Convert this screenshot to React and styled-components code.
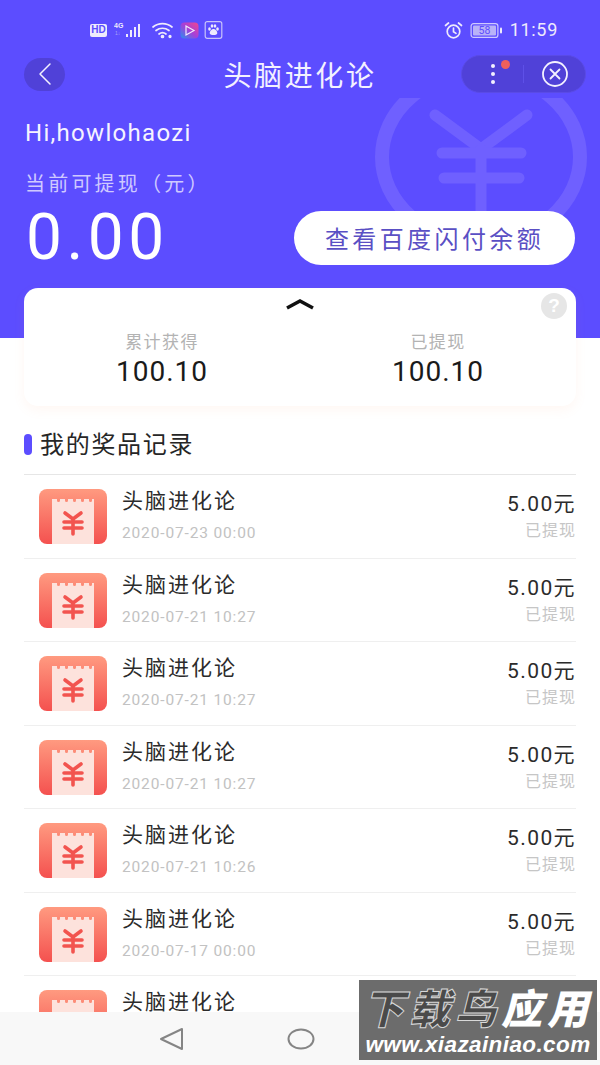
import React from "react";
import styled, { createGlobalStyle } from "styled-components";

const CJK = `"Noto Sans CJK SC", "Noto Sans", sans-serif`;
const NUM = `Roboto, "Noto Sans CJK SC", sans-serif`;

const Global = createGlobalStyle`
  html, body { margin: 0; padding: 0; background: #fff; }
  * { box-sizing: border-box; }
  #root { width: 600px; height: 1065px; }
`;

const Page = styled.div`
  position: relative;
  width: 600px;
  height: 1065px;
  overflow: hidden;
  background: #fff;
  font-family: ${CJK};
`;

const Hero = styled.header`
  position: relative;
  height: 338px;
  background: #5c4dff;
  color: #fff;
  padding-top: 20px;
  overflow: hidden;
`;

const HeroMark = styled.svg`
  position: absolute;
  left: 370px;
  top: 98px;
`;

const StatusBar = styled.div`
  display: flex;
  justify-content: space-between;
  align-items: center;
  height: 20px;
  padding: 0 42px 0 90px;
`;

const StatusGroup = styled.div`
  display: flex;
  align-items: center;
  gap: ${p => p.$gap || 5}px;
`;

const HdBadge = styled.span`
  background: #eeeafc;
  color: #5c4dff;
  font: 700 10px/12px "Liberation Sans", sans-serif;
  width: 17px;
  height: 13px;
  border-radius: 2px;
  text-align: center;
  margin-right: 2px;
`;

const Clock = styled.span`
  font: 400 18px/20px ${NUM};
  letter-spacing: 0.7px;
  color: #eeeafc;
`;

const NavBar = styled.div`
  display: grid;
  grid-template-columns: 1fr auto 1fr;
  align-items: center;
  height: 38px;
  margin-top: 15px;
  padding: 0 14px 0 24px;
  position: relative;
`;

const BackButton = styled.div`
  width: 41px;
  height: 33px;
  border-radius: 17px;
  background: #5041d8;
  display: flex;
  align-items: center;
  justify-content: center;
`;

const NavTitle = styled.h1`
  margin: 0 0 0 -10px;
  font: 400 28px/38px ${CJK};
  letter-spacing: 2.6px;
  color: #f3f1ff;
  white-space: nowrap;
`;

const Capsule = styled.div`
  justify-self: end;
  width: 125px;
  height: 38px;
  border-radius: 19px;
  background: #5041d8;
  border: 1px solid #5a4be6;
  display: flex;
  align-items: center;
`;

const CapsulePart = styled.div`
  position: relative;
  flex: 1;
  display: flex;
  align-items: center;
  justify-content: center;
  height: 18px;
  & + & { border-left: 1px solid #5e50e8; }
`;

const Dot = styled.span`
  position: absolute;
  top: -5px;
  right: 13px;
  width: 9px;
  height: 9px;
  border-radius: 50%;
  background: #f0605c;
`;

const Greeting = styled.div`
  margin: 25px 0 0 25px;
  font: 400 24px/30px ${NUM};
  letter-spacing: 1.3px;
  color: #f5f3ff;
  position: relative;
`;

const BalanceLabel = styled.div`
  margin: 21px 0 0 25px;
  font: 400 20px/28px ${CJK};
  letter-spacing: 3.2px;
  color: #cfc9ff;
  position: relative;
`;

const BalanceRow = styled.div`
  position: relative;
  display: flex;
  align-items: center;
  justify-content: space-between;
  padding: 0 25px 0 26px;
  margin-top: 14px;
  height: 54px;
`;

const BalanceValue = styled.div`
  font: 400 64px/54px ${NUM};
  letter-spacing: 4.5px;
  color: #fff;
`;

const CheckButton = styled.button`
  width: 281px;
  height: 54px;
  border: 0;
  border-radius: 27px;
  background: #fff;
  color: #5a4fc4;
  font: 400 24px/54px ${CJK};
  letter-spacing: 3.4px;
  padding: 0;
`;

const Card = styled.section`
  position: relative;
  margin: -50px 24px 0;
  height: 118px;
  border-radius: 14px;
  background: #fff;
  box-shadow: 0 4px 12px rgba(255, 150, 100, 0.08);
  display: grid;
  grid-template-columns: 1fr 1fr;
  padding-top: 41px;
`;

const Chevron = styled.svg`
  position: absolute;
  left: 261px;
  top: 10px;
`;

const Help = styled.div`
  position: absolute;
  right: 9px;
  top: 5px;
  width: 26px;
  height: 26px;
  border-radius: 50%;
  background: #e6e6e6;
  color: #fff;
  font: 700 19px/26px "Liberation Sans", sans-serif;
  text-align: center;
`;

const Stat = styled.div`
  display: flex;
  flex-direction: column;
  align-items: center;
`;

const StatLabel = styled.div`
  font: 400 17px/24px ${CJK};
  letter-spacing: 1.4px;
  color: #b3b3b3;
`;

const StatValue = styled.div`
  font: 400 28px/32px ${NUM};
  letter-spacing: 1px;
  color: #1a1a1a;
  margin-top: 3px;
`;

const SectionTitle = styled.h2`
  margin: 20px 24px 0;
  height: 49px;
  display: flex;
  align-items: flex-start;
  gap: 8px;
  font: 400 24px/34px ${CJK};
  letter-spacing: 1.7px;
  color: #262626;
  border-bottom: 1px solid #e6e6e6;
  &::before {
    content: "";
    width: 8px;
    height: 21px;
    margin-top: 8px;
    border-radius: 4px;
    background: #5c4dff;
  }
`;

const Row = styled.div`
  display: flex;
  justify-content: space-between;
  height: 83.5px;
  margin: 0 24px;
  padding: 14px 0 0 15px;
  border-bottom: 1px solid #efefef;
`;

const RowMain = styled.div`
  display: flex;
  gap: 15px;
`;

const Texts = styled.div`
  display: flex;
  flex-direction: column;
  margin-top: -3px;
`;

const RowName = styled.div`
  font: 400 21px/26px ${CJK};
  letter-spacing: 2px;
  color: #2b2b2b;
`;

const RowDate = styled.div`
  margin-top: 11px;
  font: 400 15.5px/20px ${NUM};
  letter-spacing: 0.85px;
  color: #c2c2c2;
`;

const RowSide = styled.div`
  display: flex;
  flex-direction: column;
  align-items: flex-end;
  padding-top: 2px;
`;

const Amount = styled.div`
  font: 400 21px/26px ${NUM};
  letter-spacing: 1.4px;
  color: #2b2b2b;
`;

const RowStatus = styled.div`
  margin-top: 2px;
  font: 400 16px/20px ${CJK};
  letter-spacing: 1px;
  color: #c6c6c6;
`;

const BottomNav = styled.nav`
  position: absolute;
  left: 0;
  right: 0;
  bottom: 0;
  height: 53px;
  background: #f8f8f8;
  display: flex;
  align-items: center;
  padding: 0 0 0 159px;
  gap: 103px;
`;

const Watermark = styled.div`
  position: absolute;
  left: 359px;
  top: 980px;
  width: 238px;
  height: 80px;
  background: #6c6c6c;
  display: flex;
  flex-direction: column;
  align-items: center;
  overflow: hidden;
`;

const WatermarkTitle = styled.div`
  font: italic 900 41px/52px ${CJK};
  letter-spacing: 5px;
  color: #4a4a4a;
  -webkit-text-stroke: 1px #d8d8d8;
  white-space: nowrap;
  & span { color: #fff; -webkit-text-stroke: 0; }
`;

const WatermarkUrl = styled.div`
  font: italic 700 22.5px/26px "Liberation Sans", sans-serif;
  color: #fff;
  letter-spacing: 0.4px;
  white-space: nowrap;
`;

const SignalIcon = () => (
  <svg width="32" height="18" viewBox="0 0 32 18">
    <text x="0" y="7" fontSize="7" fontWeight="700" fill="#eeeafc" fontFamily="Liberation Sans">4G</text>
    <text x="1" y="14" fontSize="5" fill="#a9a2f5" fontFamily="Liberation Sans">1↓</text>
    <g fill="#eeeafc">
      <rect x="12" y="13" width="2" height="3" />
      <rect x="16" y="9" width="2" height="7" />
      <rect x="20" y="6" width="2" height="10" />
      <rect x="24" y="3" width="2" height="13" />
    </g>
  </svg>
);

const WifiIcon = () => (
  <svg width="24" height="18" viewBox="0 0 24 18" fill="none" stroke="#eeeafc" strokeWidth="1.7" strokeLinecap="round">
    <path d="M2 6c5.500-4.500 13.500-4.500 19 0" />
    <path d="M5 9.500c3.800-3 9.200-3 13 0" />
    <path d="M8 13c2.200-1.700 4.800-1.700 7 0" />
    <circle cx="11.500" cy="15.500" r="1" fill="#eeeafc" />
    <circle cx="19" cy="15.500" r=".8" fill="#eeeafc" />
  </svg>
);

const VideoIcon = () => (
  <svg width="19" height="17" viewBox="0 0 19 17">
    <defs>
      <linearGradient id="vid" x1="0" y1="1" x2="1" y2="0">
        <stop offset="0" stopColor="#2a8ff0" />
        <stop offset="0.5" stopColor="#a53fd8" />
        <stop offset="1" stopColor="#f6468c" />
      </linearGradient>
    </defs>
    <rect x="0.500" y="0.500" width="18" height="16" rx="4" fill="url(#vid)" />
    <path d="M6 4l8 4.500-8 4.500z" fill="none" stroke="#f3e8ff" strokeWidth="1.200" />
  </svg>
);

const PawIcon = () => (
  <svg width="19" height="18" viewBox="0 0 18 18">
    <rect x="0.700" y="0.700" width="16.600" height="16.600" rx="2" fill="none" stroke="#c9c3fa" strokeWidth="1.200" />
    <g fill="#eeeafc">
      <ellipse cx="5" cy="8" rx="1.300" ry="1.700" />
      <ellipse cx="7.500" cy="5" rx="1.300" ry="1.700" />
      <ellipse cx="10.500" cy="5" rx="1.300" ry="1.700" />
      <ellipse cx="13" cy="8" rx="1.300" ry="1.700" />
      <path d="M9 8c-2 0-3.800 2.500-3.800 4 0 1.500 1.500 2 3.800 2s3.800-.5 3.800-2c0-1.500-1.800-4-3.800-4z" />
    </g>
  </svg>
);

const AlarmIcon = () => (
  <svg width="19" height="19" viewBox="0 0 19 19" fill="none" stroke="#eeeafc" strokeWidth="1.700" strokeLinecap="round">
    <circle cx="9.500" cy="10.500" r="6.300" />
    <path d="M9.500 7v3.800l2.500 1.600" />
    <path d="M1.500 4.500L4.500 2M17.500 4.500L14.500 2" />
  </svg>
);

const BatteryIcon = () => (
  <svg width="33" height="15" viewBox="0 0 32 15">
    <rect x="0.600" y="0.600" width="26.800" height="13.800" rx="2.500" fill="none" stroke="#cfc9ff" strokeWidth="1.200" />
    <rect x="2.500" y="2.500" width="23" height="10" rx="1" fill="#b9b2f8" />
    <rect x="29.500" y="4.500" width="2" height="6" rx="1" fill="#eeeafc" />
    <text x="14" y="11.300" fontSize="10.500" fill="#5c4dff" textAnchor="middle" fontFamily="Roboto">58</text>
  </svg>
);

const ReceiptIcon = ({ id }) => (
  <svg width="68" height="55" viewBox="0 0 68 55">
    <defs>
      <linearGradient id={`bg${id}`} x1="0" y1="0" x2="0" y2="1">
        <stop offset="0" stopColor="#ff9a80" />
        <stop offset="1" stopColor="#f4514f" />
      </linearGradient>
    </defs>
    <rect width="68" height="55" rx="8" fill={`url(#bg${id})`} />
    <path
      d="M13 10h5v1.500a1.500 1.500 0 0 0 3 0V10h5v1.500a1.500 1.500 0 0 0 3 0V10h5v1.500a1.500 1.500 0 0 0 3 0V10h5v1.500a1.500 1.500 0 0 0 3 0V10h5v1.500a1.500 1.500 0 0 0 3 0V10h2v45H13z"
      fill="#fde2dc"
    />
    <g fill="none" stroke="#f2544f" strokeWidth="3.600" strokeLinecap="round">
      <path d="M26 24l8 6 8-6" />
      <path d="M25 33h18M25 39h18M34 30v15" />
    </g>
  </svg>
);

const records = [
  "2020-07-23 00:00",
  "2020-07-21 10:27",
  "2020-07-21 10:27",
  "2020-07-21 10:27",
  "2020-07-21 10:26",
  "2020-07-17 00:00",
  "",
];

export default function App() {
  return (
    <Page>
      <Global />
      <Hero>
        <HeroMark width="220" height="170" viewBox="370 98 220 170" fill="none" stroke="#6f60ff" strokeLinecap="round">
          <ellipse cx="481" cy="157" rx="99" ry="85" strokeWidth="14" />
          <g strokeWidth="11">
            <path d="M435 115l46 34 46-34" />
            <path d="M442 153h79M444 178h75M481 149v75" />
          </g>
        </HeroMark>
        <StatusBar>
          <StatusGroup>
            <HdBadge>HD</HdBadge>
            <SignalIcon />
            <WifiIcon />
            <VideoIcon />
            <PawIcon />
          </StatusGroup>
          <StatusGroup $gap={7}>
            <AlarmIcon />
            <BatteryIcon />
            <Clock>11:59</Clock>
          </StatusGroup>
        </StatusBar>
        <NavBar>
          <BackButton>
            <svg width="16" height="24" viewBox="0 0 16 24" fill="none" stroke="#f3f1ff" strokeWidth="1.500" strokeLinecap="round" strokeLinejoin="round">
              <path d="M13 2L3 12l10 10" />
            </svg>
          </BackButton>
          <NavTitle>头脑进化论</NavTitle>
          <Capsule>
            <CapsulePart>
              <svg width="6" height="22" viewBox="0 0 6 22" fill="#f3f1ff">
                <circle cx="3" cy="3" r="2" />
                <circle cx="3" cy="11" r="2" />
                <circle cx="3" cy="19" r="2" />
              </svg>
              <Dot />
            </CapsulePart>
            <CapsulePart>
              <svg width="28" height="28" viewBox="0 0 28 28" fill="none" stroke="#f3f1ff" strokeWidth="1.800" strokeLinecap="round">
                <circle cx="14" cy="14" r="12" />
                <path d="M9.500 9.500l9 9M18.500 9.500l-9 9" />
              </svg>
            </CapsulePart>
          </Capsule>
        </NavBar>
        <Greeting>Hi,howlohaozi</Greeting>
        <BalanceLabel>当前可提现（元）</BalanceLabel>
        <BalanceRow>
          <BalanceValue>0.00</BalanceValue>
          <CheckButton>查看百度闪付余额</CheckButton>
        </BalanceRow>
      </Hero>

      <Card>
        <Chevron width="30" height="12" viewBox="0 0 30 12" fill="none" stroke="#111" strokeWidth="3.500">
          <path d="M2 10L15 3l13 7" />
        </Chevron>
        <Help>?</Help>
        <Stat>
          <StatLabel>累计获得</StatLabel>
          <StatValue>100.10</StatValue>
        </Stat>
        <Stat>
          <StatLabel>已提现</StatLabel>
          <StatValue>100.10</StatValue>
        </Stat>
      </Card>

      <SectionTitle>我的奖品记录</SectionTitle>
      {records.map((date, i) => (
        <Row key={i}>
          <RowMain>
            <ReceiptIcon id={i} />
            <Texts>
              <RowName>头脑进化论</RowName>
              <RowDate>{date}</RowDate>
            </Texts>
          </RowMain>
          <RowSide>
            <Amount>5.00元</Amount>
            <RowStatus>已提现</RowStatus>
          </RowSide>
        </Row>
      ))}

      <BottomNav>
        <svg width="25" height="24" viewBox="0 0 25 24" fill="none" stroke="#858585" strokeWidth="2" strokeLinejoin="round">
          <path d="M23 2v20L2 12z" />
        </svg>
        <svg width="28" height="22" viewBox="0 0 28 22" fill="none" stroke="#858585" strokeWidth="2">
          <ellipse cx="14" cy="11" rx="12.500" ry="9.500" />
        </svg>
      </BottomNav>

      <Watermark>
        <WatermarkTitle>下载鸟<span>应用</span></WatermarkTitle>
        <WatermarkUrl>www.xiazainiao.com</WatermarkUrl>
      </Watermark>
    </Page>
  );
}
